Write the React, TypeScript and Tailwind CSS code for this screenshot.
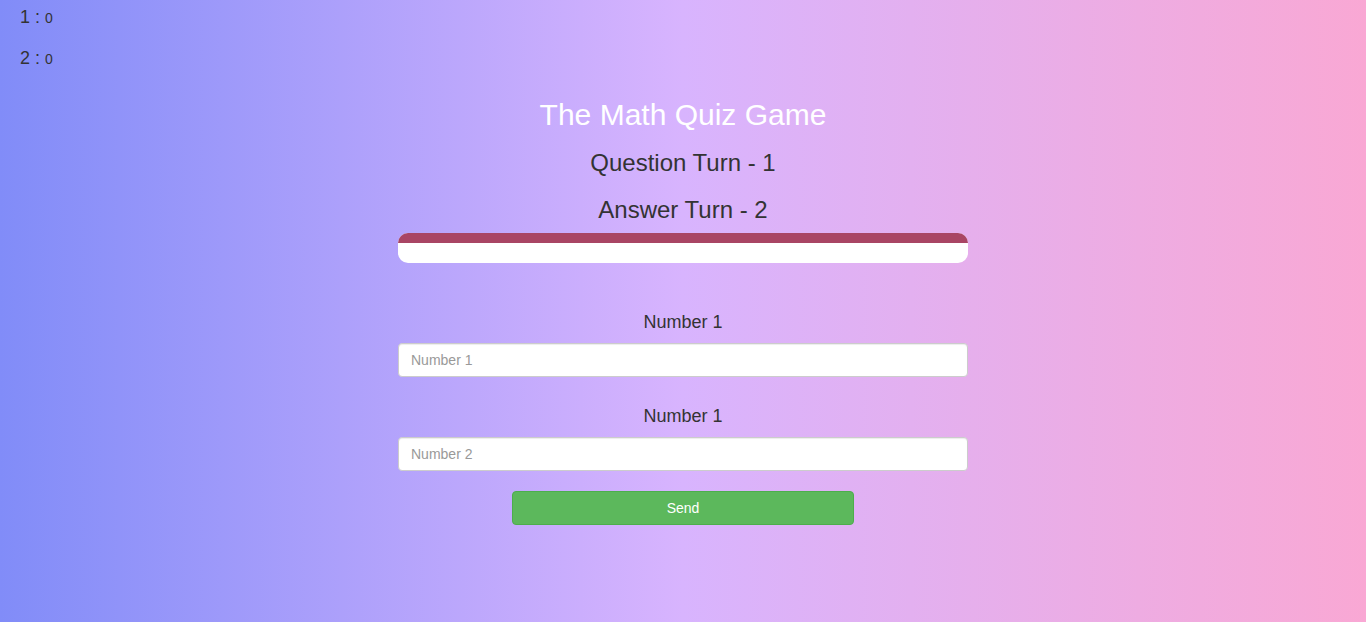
import { useState } from 'react';

export default function App() {
  const [n1, setN1] = useState('');
  const [n2, setN2] = useState('');

  return (
    <div className="relative min-h-[622px] w-full bg-[linear-gradient(to_right,#818cf8,#d8b4fe,#f9a8d4)] font-['Liberation_Sans',Arial,sans-serif] text-[#333]">
      {/* Scores */}
      <div className="absolute left-5 top-[7px] text-lg leading-5">
        <div className="h-[41px]">
          1 : <span className="text-sm">0</span>
        </div>
        <div>
          2 : <span className="text-sm">0</span>
        </div>
      </div>

      <div className="mx-auto w-[570px] pt-[98px] text-center">
        <h1 className="text-[30px] leading-[33px] text-white">The Math Quiz Game</h1>
        <h2 className="mt-[19px] text-2xl leading-[26px]">Question Turn - 1</h2>
        <h2 className="mt-[21px] text-2xl leading-[26px]">Answer Turn - 2</h2>

        <div className="mt-[10px] h-[30px] overflow-hidden rounded-[10px] bg-white">
          <div className="h-[10px] w-full bg-[#a94564]" />
        </div>

        <label className="mt-[49px] block text-lg leading-5">Number 1</label>
        <input
          value={n1}
          onChange={(e) => setN1(e.target.value)}
          placeholder="Number 1"
          className="mt-[11px] block h-[34px] w-full rounded border border-[#ccc] bg-white px-3 text-sm text-[#555] shadow-[inset_0_1px_1px_rgba(0,0,0,0.075)] placeholder:text-[#999] focus:outline-none"
        />

        <label className="mt-[29px] block text-lg leading-5">Number 1</label>
        <input
          value={n2}
          onChange={(e) => setN2(e.target.value)}
          placeholder="Number 2"
          className="mt-[11px] block h-[34px] w-full rounded border border-[#ccc] bg-white px-3 text-sm text-[#555] shadow-[inset_0_1px_1px_rgba(0,0,0,0.075)] placeholder:text-[#999] focus:outline-none"
        />

        <button
          type="button"
          className="mx-auto mt-5 block h-[34px] w-[342px] rounded border border-[#4cae4c] bg-[#5cb85c] text-sm text-white"
        >
          Send
        </button>
      </div>
    </div>
  );
}
